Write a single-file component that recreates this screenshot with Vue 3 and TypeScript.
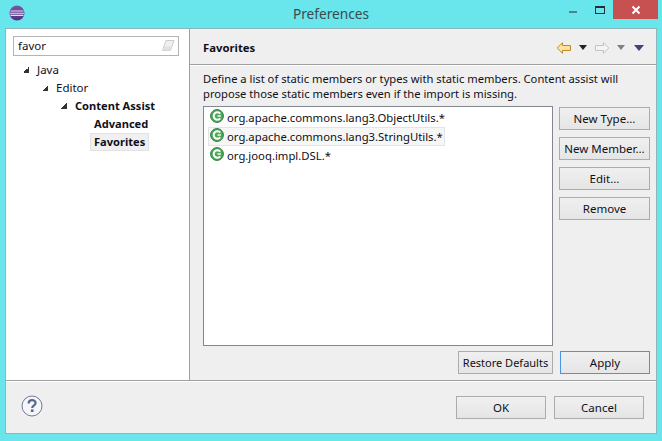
<script setup lang="ts">
const tree = [
  { label: 'Java', level: 0, open: true, bold: false, selected: false },
  { label: 'Editor', level: 1, open: true, bold: false, selected: false },
  { label: 'Content Assist', level: 2, open: true, bold: true, selected: false },
  { label: 'Advanced', level: 3, open: false, bold: true, selected: false },
  { label: 'Favorites', level: 3, open: false, bold: true, selected: true },
]

const members = [
  { name: 'org.apache.commons.lang3.ObjectUtils.*', selected: false },
  { name: 'org.apache.commons.lang3.StringUtils.*', selected: true },
  { name: 'org.jooq.impl.DSL.*', selected: false },
]

const sideButtons = ['New Type...', 'New Member...', 'Edit...', 'Remove']
</script>

<template>
  <div class="frame">
    <header class="titlebar">
      <div class="title-left">
        <svg class="eclipse" width="16" height="16" viewBox="0 0 16 16">
          <defs>
            <linearGradient id="ball" x1="0" y1="0" x2="0" y2="1">
              <stop offset="0" stop-color="#7a58a6" />
              <stop offset="1" stop-color="#4c3184" />
            </linearGradient>
          </defs>
          <circle cx="8" cy="8" r="7.5" fill="url(#ball)" />
          <path d="M1.5 6h13M1 8.2h14M1.5 10.4h13" stroke="#e6dcf0" stroke-width="1.1" />
        </svg>
      </div>
      <div class="title-text">Preferences</div>
      <div class="controls">
        <span class="minimize"></span>
        <span class="maximize"></span>
        <span class="close">
          <svg width="10" height="10" viewBox="0 0 10 10">
            <path d="M1.5 1.5l7 7M8.5 1.5l-7 7" stroke="#fff" stroke-width="2" />
          </svg>
        </span>
      </div>
    </header>

    <div class="client">
      <div class="main">
        <aside class="sidebar">
          <div class="search">
            <span>favor</span>
            <svg width="14" height="12" viewBox="0 0 14 12">
              <path d="M5 .5h8L9.5 10.5h-8z" fill="#f0f0f0" stroke="#cccccc" />
              <path d="M3 6.5h8L9.5 10.5h-8z" fill="#e0e0e0" />
            </svg>
          </div>
          <ul class="tree">
            <li
              v-for="node in tree"
              :key="node.label"
              class="node"
              :style="{ paddingLeft: node.level * 19 + 'px' }"
            >
              <i class="twisty" :class="{ open: node.open }"></i>
              <span class="node-label" :class="{ bold: node.bold, selected: node.selected }">{{ node.label }}</span>
            </li>
          </ul>
        </aside>

        <section class="page">
          <div class="page-head">
            <h2>Favorites</h2>
            <div class="nav">
              <svg width="16" height="12" viewBox="0 0 16 12">
                <path d="M1.2 6L6.5.7v2.8h8v5h-8v2.8z" fill="#fde4a0" stroke="#c28a1e" />
              </svg>
              <i class="arrow black"></i>
              <svg class="forward" width="16" height="12" viewBox="0 0 16 12">
                <path d="M14.8 6L9.5.7v2.8h-8v5h8v2.8z" fill="#f4f4f4" stroke="#c4c4c4" />
              </svg>
              <i class="arrow gray"></i>
              <i class="arrow navy"></i>
            </div>
          </div>
          <div class="page-body">
            <p class="desc">Define a list of static members or types with static members. Content assist will<br>propose those static members even if the import is missing.</p>
            <div class="editor">
              <ul class="list">
                <li v-for="m in members" :key="m.name" class="member" :class="{ selected: m.selected }">
                  <svg class="class-icon" width="14" height="14" viewBox="0 0 14 14">
                    <circle cx="7" cy="7" r="6.4" fill="#4da85a" stroke="#2b7f3b" />
                    <path d="M10.2 4.6A3.7 3.7 0 1 0 10.2 9.4" fill="none" stroke="#fff" stroke-width="2" />
                    <path d="M7.5 7h3.4" stroke="#fff" stroke-width="1.4" />
                  </svg>
                  <span>{{ m.name }}</span>
                </li>
              </ul>
              <div class="side-buttons">
                <button v-for="b in sideButtons" :key="b" class="btn">{{ b }}</button>
              </div>
            </div>
            <div class="page-actions">
              <button class="btn restore">Restore Defaults</button>
              <button class="btn apply">Apply</button>
            </div>
          </div>
        </section>
      </div>

      <footer class="footer">
        <svg class="help" width="22" height="22" viewBox="0 0 22 22">
          <circle cx="11" cy="11" r="10" fill="#f6f6f8" stroke="#6d7c9c" />
          <path d="M7.6 8.4c0-4.4 7-4.4 7-.4 0 2.7-3.4 2.6-3.4 5" fill="none" stroke="#56688c" stroke-width="2.2" />
          <rect x="9.9" y="14.4" width="2.6" height="2.6" fill="#56688c" />
        </svg>
        <div class="footer-actions">
          <button class="btn">OK</button>
          <button class="btn">Cancel</button>
        </div>
      </footer>
    </div>
  </div>
</template>

<style scoped>
.frame {
  width: 662px;
  height: 441px;
  box-sizing: border-box;
  padding: 0 5px 7px 5px;
  background: #69e6ec;
  display: flex;
  flex-direction: column;
  font-family: "Noto Sans", "Open Sans", sans-serif;
  font-size: 11.5px;
  color: #101018;
}

.titlebar {
  height: 28px;
  flex: none;
  display: grid;
  grid-template-columns: 1fr auto 1fr;
}

.title-left {
  display: flex;
  align-items: flex-start;
  padding: 5px 0 0 4px;
}

.title-text {
  font-size: 13.7px;
  line-height: 28px;
  color: #3d4a4d;
}

.controls {
  display: flex;
  justify-content: flex-end;
  margin-right: -1px;
}

.minimize {
  width: 8px;
  height: 2px;
  margin: 11px 18px 0 0;
  background: #46868c;
}

.maximize {
  width: 8px;
  height: 5px;
  margin: 6px 8px 0 0;
  border: 1px solid #1e3034;
  border-top-width: 2px;
}

.close {
  width: 45px;
  height: 19px;
  background: #c75050;
  display: flex;
  align-items: center;
  justify-content: center;
}

.client {
  flex: 1;
  min-height: 0;
  display: flex;
  flex-direction: column;
  border: 1px solid #8fb6bc;
  background: #efefef;
}

.main {
  flex: 1;
  min-height: 0;
  display: flex;
  border-bottom: 1px solid #a0a0a0;
}

.sidebar {
  width: 184px;
  flex: none;
  box-sizing: border-box;
  padding: 7px 0 0 7px;
  background: #fff;
  border-right: 1px solid #a0a0a0;
}

.search {
  width: 166px;
  height: 20px;
  box-sizing: border-box;
  padding: 0 3px 0 4px;
  border: 1px solid #b4b4b4;
  display: flex;
  align-items: center;
  justify-content: space-between;
  line-height: 18px;
}

.tree {
  list-style: none;
  margin: 5px 0 0;
  padding: 0 0 0 10px;
}

.node {
  height: 18px;
  display: flex;
  align-items: center;
  white-space: nowrap;
}

.twisty {
  width: 6px;
  height: 6px;
  flex: none;
  margin-right: 8px;
}

.twisty.open {
  background: linear-gradient(135deg, transparent 50%, #333 50%);
}

.node-label {
  line-height: 16px;
  padding: 0 3px;
  margin-left: -4px;
  border: 1px solid transparent;
}

.node-label.bold {
  font-weight: 700;
  font-size: 11.1px;
}

.node-label.selected {
  background: #f0f0f0;
  border-color: #e2e2e2;
}

.page {
  flex: 1;
  min-width: 0;
  display: flex;
  flex-direction: column;
}

.page-head {
  height: 36px;
  flex: none;
  display: flex;
  align-items: center;
  justify-content: space-between;
  padding: 2px 12px 0 13px;
  box-sizing: border-box;
  border-bottom: 1px solid #a0a0a0;
  box-shadow: 0 1px 0 #fff;
}

.page-head h2 {
  margin: 0;
  font-size: 11.3px;
  font-weight: 700;
}

.nav {
  display: flex;
  align-items: center;
}

.arrow {
  width: 0;
  height: 0;
  border-left: 4px solid transparent;
  border-right: 4px solid transparent;
  border-top: 5px solid #222;
}

.arrow.black {
  margin: 0 7px;
}

.arrow.gray {
  border-top-color: #808080;
  margin: 0 9px 0 7px;
}

.arrow.navy {
  border-left-width: 5px;
  border-right-width: 5px;
  border-top: 6px solid #4a3f78;
}

.page-body {
  flex: 1;
  min-height: 0;
  display: flex;
  flex-direction: column;
  padding: 6px 6px 6px 13px;
}

.desc {
  margin: 0;
  line-height: 15px;
  font-size: 11.2px;
}

.editor {
  flex: 1;
  min-height: 0;
  display: flex;
  gap: 6px;
  margin-top: 5px;
}

.list {
  width: 350px;
  flex: none;
  box-sizing: border-box;
  margin: 0 0 5px;
  padding: 1px 0 0 4px;
  list-style: none;
  background: #fff;
  border: 1px solid #828790;
}

.member {
  width: fit-content;
  height: 19px;
  box-sizing: border-box;
  padding-left: 1px;
  padding-right: 1px;
  display: flex;
  align-items: center;
  gap: 3px;
  border: 1px solid transparent;
  white-space: nowrap;
  font-size: 11.3px;
}

.class-icon {
  margin-bottom: 4px;
}

.member.selected {
  background: #f6f6f6;
  border-color: #e4e4e4;
}

.side-buttons {
  display: flex;
  flex-direction: column;
  gap: 7px;
  padding-top: 1px;
}

.btn {
  width: 91px;
  height: 23px;
  box-sizing: border-box;
  padding: 0;
  border: 1px solid #acacac;
  background: linear-gradient(#f0f0f0, #e5e5e5);
  font: inherit;
  color: inherit;
  white-space: nowrap;
}

.page-actions {
  display: flex;
  gap: 7px;
  justify-content: flex-end;
  flex: none;
}

.btn.restore {
  width: 95px;
  font-size: 11px;
}

.btn.apply {
  width: 90px;
  border-color: #4a94e8;
}

.footer {
  height: 52px;
  flex: none;
  box-sizing: border-box;
  padding: 15px 12px 0 15px;
  display: flex;
  justify-content: space-between;
  box-shadow: inset 0 1px 0 #fff;
}

.help {
  margin-top: -1px;
}

.footer-actions {
  display: flex;
  gap: 8px;
}

.footer-actions .btn {
  width: 90px;
}
</style>

<style>
html,
body {
  margin: 0;
  overflow: hidden;
}
</style>
